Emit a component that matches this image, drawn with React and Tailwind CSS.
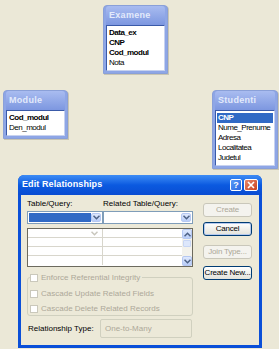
import React from "react";

const F = { fontFamily: '"Liberation Sans", Arial, sans-serif' };

function TableBox({ title, items, left, top, width, selectedIndex }) {
  return (
    <div
      className="absolute rounded-t-[4px] border border-[#8aa0d8] bg-[#8ea6e6] p-[2px] pt-0 shadow-[1px_1px_0_#c9c5b2]"
      style={{ left, top, width }}
    >
      <div className="h-[19px] rounded-t-[3px] bg-gradient-to-b from-[#a9bcf0] to-[#7d97e0] px-[3px] pt-[4px] text-[9px] font-semibold leading-[10px] tracking-[0.3px] text-[#e3eafb]">
        {title}
      </div>
      <div className="border border-[#3a5aa8] border-r-[#c7d2f0] border-b-[#c7d2f0] bg-white px-[1px] py-[2px]">
        {items.map((it, i) => (
          <div
            key={i}
            className={`h-[10px] overflow-hidden whitespace-nowrap pl-[1px] text-[8px] leading-[10px] ${it.b ? "font-bold tracking-[-0.5px]" : "tracking-[-0.5px]"} ${
              i === selectedIndex ? "bg-[#316ac5] text-white" : "text-black"
            }`}
          >
            {it.t}
          </div>
        ))}
      </div>
    </div>
  );
}

function Chevron({ color = "#4d6185" }) {
  return (
    <svg width="7" height="5" viewBox="0 0 7 5">
      <path d="M0.5 0.8 L3.5 3.8 L6.5 0.8" fill="none" stroke={color} strokeWidth="1.5" />
    </svg>
  );
}

function ArrowBtn({ up, className = "" }) {
  return (
    <div className={`flex items-center justify-center rounded-[2px] border border-[#b5c8f2] bg-gradient-to-b from-[#dfe9fd] to-[#b9cdf7] ${className}`}>
      <svg width="7" height="5" viewBox="0 0 7 5" style={{ transform: up ? "rotate(180deg)" : "none" }}>
        <path d="M0.5 0.8 L3.5 3.8 L6.5 0.8" fill="none" stroke="#4d6185" strokeWidth="1.5" />
      </svg>
    </div>
  );
}

function Btn({ children, disabled, focus }) {
  return (
    <div
      className={`flex h-[14px] w-[49px] items-center justify-center whitespace-nowrap rounded-[3px] border text-[8px] leading-none tracking-[-0.2px] ${
        disabled
          ? "border-[#c9c7ba] bg-[#f4f3ee] text-[#aca899]"
          : focus
          ? "border-[#003c74] bg-gradient-to-b from-[#ffffff] to-[#e3e2da] text-black shadow-[inset_0_0_0_1px_#b6c9ee]"
          : "border-[#003c74] bg-gradient-to-b from-[#ffffff] to-[#e3e2da] text-black"
      }`}
    >
      {children}
    </div>
  );
}

function Check({ label }) {
  return (
    <div className="flex h-[9px] items-center gap-[3px]">
      <div className="h-[8px] w-[8px] border border-[#cac8bb] bg-white" />
      <span className="text-[8px] leading-none text-[#aca899]">{label}</span>
    </div>
  );
}

export default function App() {
  return (
    <div className="relative h-[349px] w-[279px] overflow-hidden bg-[#ebe8d7]" style={F}>
      <TableBox
        title="Examene"
        left={103}
        top={5}
        width={65}
        items={[
          { t: "Data_ex", b: true },
          { t: "CNP", b: true },
          { t: "Cod_modul", b: true },
          { t: "Nota" },
        ]}
      />
      <TableBox
        title="Module"
        left={3}
        top={90}
        width={65}
        items={[{ t: "Cod_modul", b: true }, { t: "Den_modul" }]}
      />
      <TableBox
        title="Studenti"
        left={212}
        top={90}
        width={66}
        selectedIndex={0}
        items={[
          { t: "CNP", b: true },
          { t: "Nume_Prenume" },
          { t: "Adresa" },
          { t: "Localitatea" },
          { t: "Judetul" },
        ]}
      />

      {/* Dialog window */}
      <div className="absolute left-[18px] top-[175px] flex h-[173px] w-[244px] flex-col rounded-t-[6px] bg-[#0a4fd8]">
        <div className="flex h-[20px] items-center justify-between rounded-t-[6px] bg-gradient-to-b from-[#3d8cf5] via-[#0b5ae0] to-[#0a4cd2] pl-[4px] pr-[4px]">
          <span className="text-[9px] font-bold tracking-[0.1px] text-white">Edit Relationships</span>
          <div className="flex gap-[2px]">
            <div className="flex h-[12px] w-[12px] items-center justify-center rounded-[2px] border border-white bg-gradient-to-br from-[#5a9af8] to-[#2a66e0] text-[9px] font-bold leading-none text-white">
              ?
            </div>
            <div className="flex h-[12px] w-[14px] items-center justify-center rounded-[2px] border border-white bg-gradient-to-br from-[#e8866a] to-[#c8401c]">
              <svg width="8" height="8" viewBox="0 0 8 8">
                <path d="M1 1 L7 7 M7 1 L1 7" stroke="white" strokeWidth="1.6" />
              </svg>
            </div>
          </div>
        </div>
        <div className="mx-[3px] mb-[3px] flex flex-1 bg-[#ece9d8] pl-[6px] pr-[7px] pt-[4px]">
          {/* left column */}
          <div className="flex w-[166px] flex-col">
            <div className="flex h-[9px] text-[8px] leading-[9px] text-black">
              <span className="w-[76px]">Table/Query:</span>
              <span>Related Table/Query:</span>
            </div>
            <div className="mt-[3px] flex h-[13px]">
              <div className="flex w-[76px] border border-[#7f9db9] bg-white p-[1px]">
                <div className="flex-1 bg-[#316ac5]" />
                <ArrowBtn className="w-[10px]" />
              </div>
              <div className="flex w-[90px] border border-[#7f9db9] bg-white p-[1px]">
                <div className="flex-1" />
                <ArrowBtn className="w-[10px]" />
              </div>
            </div>
            <div className="mt-[4px] flex h-[39px] border border-[#6c6a5e] bg-white">
              <div className="flex flex-1 flex-col">
                {[0, 1, 2, 3].map((r) => (
                  <div key={r} className={`flex h-[9px] ${r < 3 ? "border-b border-[#d8d6cc]" : ""}`}>
                    <div className="relative w-[75px] border-r border-[#d8d6cc]">
                      {r === 0 && (
                        <div className="absolute right-[4px] top-[2px]">
                          <Chevron color="#c9c7bd" />
                        </div>
                      )}
                    </div>
                    <div className="flex-1" />
                  </div>
                ))}
              </div>
              <div className="flex w-[10px] flex-col bg-[#f3f2ec]">
                <ArrowBtn up className="h-[10px]" />
                <div className="flex-1 px-[1px] py-[1px]">
                  <div className="h-[7px] rounded-[1px] border border-[#c8d6f4] bg-[#dde7fb]" />
                </div>
                <ArrowBtn className="h-[10px]" />
              </div>
            </div>
            {/* group */}
            <div className="relative mt-[10px] h-[39px] rounded-[3px] border border-[#d0d0bf]">
              <div className="absolute left-[2px] top-[-5px] bg-[#ece9d8] pr-[2px]">
                <Check label="Enforce Referential Integrity" />
              </div>
              <div className="absolute left-[2px] top-[11px]">
                <Check label="Cascade Update Related Fields" />
              </div>
              <div className="absolute left-[2px] top-[26px]">
                <Check label="Cascade Delete Related Records" />
              </div>
            </div>
            <div className="mt-[3px] flex items-center">
              <span className="w-[73px] pl-[1px] text-[8px] leading-none text-black">Relationship Type:</span>
              <div className="flex h-[19px] w-[92px] items-center rounded-[2px] border border-[#d0d0bf] pl-[4px] text-[8px] leading-none text-[#aca899]">
                One-to-Many
              </div>
            </div>
          </div>
          {/* right column */}
          <div className="ml-[10px] flex flex-col pt-[4px]">
            <Btn disabled>Create</Btn>
            <div className="mt-[5px]">
              <Btn focus>Cancel</Btn>
            </div>
            <div className="mt-[9px]">
              <Btn disabled>Join Type...</Btn>
            </div>
            <div className="mt-[7px]">
              <Btn>Create New...</Btn>
            </div>
          </div>
        </div>
      </div>
    </div>
  );
}
